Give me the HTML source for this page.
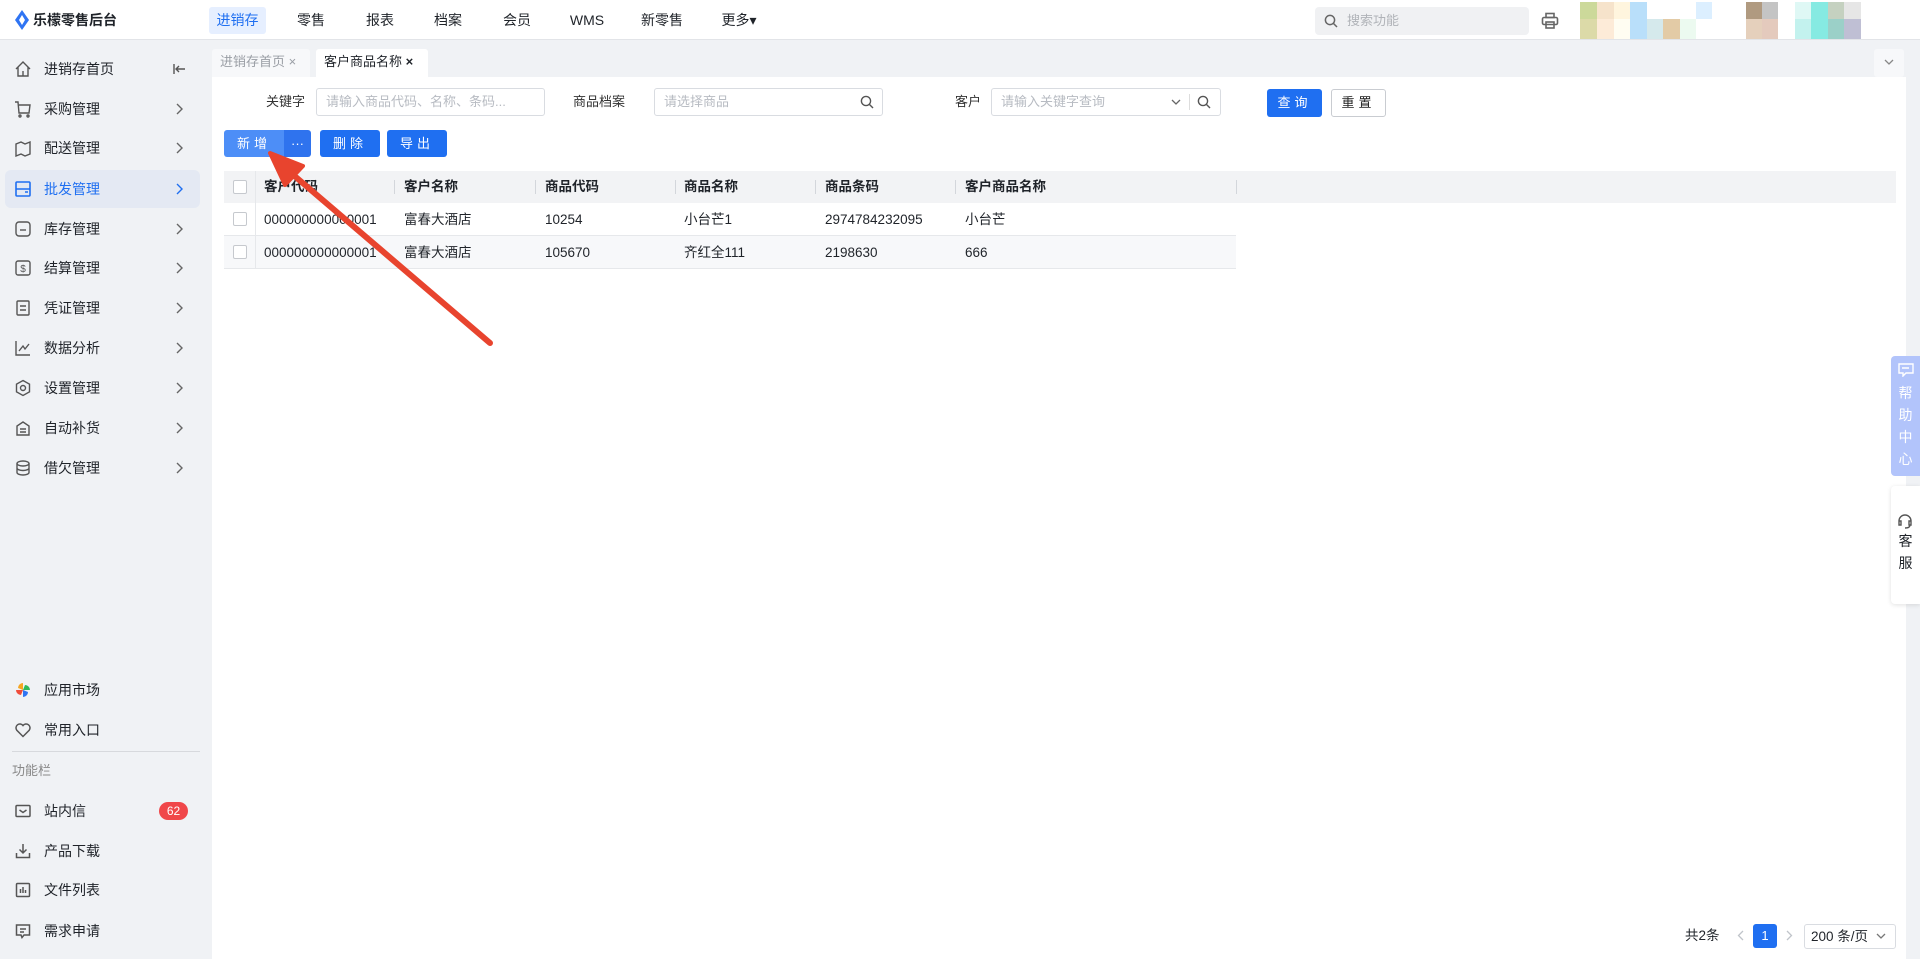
<!DOCTYPE html>
<html><head><meta charset="utf-8">
<style>
*{box-sizing:border-box;margin:0;padding:0}
body{width:1920px;height:959px;overflow:hidden;background:#f0f2f5;font-family:"Liberation Sans","Noto Sans CJK SC",sans-serif;font-size:14px;color:#1f2329;position:relative}
.abs{position:absolute}
.top{left:0;top:0;width:1920px;height:40px;background:#fff;border-bottom:1px solid #e2e4e8}
.nav{top:7px;height:27px;line-height:27px;font-size:14px;color:#1f2329;text-align:center}
.side{left:0;top:40px;width:211px;height:919px;background:#f0f2f5}
.mi{left:0;width:211px;height:36px;line-height:36px;font-size:14px}
.mi .ic{position:absolute;left:14px;top:9px;width:18px;height:18px}
.mi .tx{position:absolute;left:44px}
.mi .ch{position:absolute;left:175px;top:12px;width:8px;height:12px}
.content{left:212px;top:77px;width:1694px;height:882px;background:#fff}
.inp{height:28px;border:1px solid #d9dce1;border-radius:3px;background:#fff;color:#b7bbc2;font-size:13px;line-height:26px;padding-left:9px}
.lbl{font-size:13px;line-height:28px;color:#333}
.btn{height:27px;line-height:27px;color:#fff;background:#1f6ff1;border-radius:3px;text-align:center;font-size:13px;letter-spacing:4px}
.th{top:171px;height:32px;line-height:32px;font-weight:bold;font-size:13.5px}
.td{height:33px;line-height:33px;font-size:13.5px}
.cb{width:14px;height:14px;border:1px solid #c6c9ce;background:#fff;border-radius:2px}
.sep{width:1px;height:14px;background:#d3d6db;top:180px}
</style></head><body>
<div class="abs top"></div>
<svg class="abs" style="left:14px;top:10px" width="16" height="20" viewBox="0 0 16 20"><path d="M8 0L15 10L8 20L1 10Z" fill="#2f74f3"/><path d="M8 5L11 10L8 15L5 10Z" fill="#fff"/></svg>
<div class="abs" style="left:33px;top:9px;font-size:14px;font-weight:bold;line-height:22px">乐檬零售后台</div>
<div class="abs nav" style="left:209px;width:57px;background:#e6efff;color:#1f6ff1;border-radius:3px">进销存</div>
<div class="abs nav" style="left:291px;width:40px">零售</div>
<div class="abs nav" style="left:360px;width:40px">报表</div>
<div class="abs nav" style="left:428px;width:40px">档案</div>
<div class="abs nav" style="left:497px;width:40px">会员</div>
<div class="abs nav" style="left:562px;width:50px">WMS</div>
<div class="abs nav" style="left:637px;width:50px">新零售</div>
<div class="abs nav" style="left:714px;width:50px">更多▾</div>
<div class="abs" style="left:1315px;top:7px;width:214px;height:28px;background:#f0f1f3;border-radius:4px;color:#b0b3b8;font-size:13px;line-height:28px;padding-left:32px">搜索功能</div>
<svg class="abs" style="left:1324px;top:14px" width="14" height="14" viewBox="0 0 14 14"><circle cx="6" cy="6" r="4.6" fill="none" stroke="#666" stroke-width="1.5"/><path d="M9.5 9.5L13 13" stroke="#666" stroke-width="1.5"/></svg>
<svg class="abs" style="left:1541px;top:12px" width="18" height="18" viewBox="0 0 18 18" fill="none" stroke="#666" stroke-width="1.6"><rect x="5" y="1.5" width="8" height="4"/><rect x="1.5" y="5.5" width="15" height="7" rx="1.5"/><rect x="5" y="10" width="8" height="6"/></svg>
<div class="abs" style="left:1525px;top:0;width:395px;height:40px">
<svg width="395" height="40"><g>
<rect x="55" y="2" width="17" height="17" fill="#ccd99a"/><rect x="72" y="2" width="17" height="17" fill="#f6e3cb"/><rect x="89" y="2" width="16" height="17" fill="#fff5de"/><rect x="105" y="2" width="17" height="17" fill="#b9dffa"/><rect x="171" y="2" width="16" height="17" fill="#dcefff"/><rect x="221" y="2" width="16" height="17" fill="#b09a80"/><rect x="237" y="2" width="16" height="17" fill="#c4c4c4"/><rect x="270" y="2" width="16" height="17" fill="#dff8f5"/><rect x="286" y="2" width="17" height="17" fill="#86eae2"/><rect x="303" y="2" width="16" height="17" fill="#c5d1c0"/><rect x="319" y="2" width="17" height="17" fill="#e6e6e6"/>
<rect x="55" y="19" width="17" height="20" fill="#dcdaa8"/><rect x="72" y="19" width="17" height="20" fill="#fdebd8"/><rect x="89" y="19" width="16" height="20" fill="#fffdf2"/><rect x="105" y="19" width="17" height="20" fill="#b9dffa"/><rect x="122" y="19" width="16" height="20" fill="#d5e9ec"/><rect x="138" y="19" width="17" height="20" fill="#e3cba6"/><rect x="155" y="19" width="16" height="20" fill="#ecfaf0"/><rect x="221" y="19" width="16" height="20" fill="#e5d0bc"/><rect x="237" y="19" width="16" height="20" fill="#e4cabd"/><rect x="270" y="19" width="16" height="20" fill="#c3f2ee"/><rect x="286" y="19" width="17" height="20" fill="#86eae2"/><rect x="303" y="19" width="16" height="20" fill="#9bd0c8"/><rect x="319" y="19" width="17" height="20" fill="#bfbfd4"/>
</g></svg></div>

<div class="abs side"></div>
<div class="abs" style="left:5px;top:170px;width:195px;height:38px;background:#e4e9f3;border-radius:6px"></div>
<!-- menu -->
<div class="abs mi" style="top:51px"><svg class="ic" viewBox="0 0 18 18" fill="none" stroke="#555" stroke-width="1.4"><path d="M2 9L9 2L16 9M4 7V16H14V7M9 11V16"/></svg><span class="tx">进销存首页</span><svg class="abs" style="left:172px;top:12px" width="14" height="12" viewBox="0 0 14 12" fill="none" stroke="#555" stroke-width="1.4"><path d="M2 1V11M13 6H4M7 3L4 6L7 9"/></svg></div>
<div class="abs mi" style="top:91px"><svg class="ic" viewBox="0 0 18 18" fill="none" stroke="#555" stroke-width="1.4"><path d="M1 2H4L5 13H15L16 5H5"/><circle cx="6" cy="16" r="1"/><circle cx="14" cy="16" r="1"/></svg><span class="tx">采购管理</span><svg class="ch" viewBox="0 0 8 12" fill="none" stroke="#666" stroke-width="1.4"><path d="M2 1L7 6L2 11"/></svg></div>
<div class="abs mi" style="top:130px"><svg class="ic" viewBox="0 0 18 18" fill="none" stroke="#555" stroke-width="1.4"><path d="M2 5L7 3L11 5L16 3V15L11 17L7 15L2 17Z"/></svg><span class="tx">配送管理</span><svg class="ch" viewBox="0 0 8 12" fill="none" stroke="#666" stroke-width="1.4"><path d="M2 1L7 6L2 11"/></svg></div>
<div class="abs mi" style="top:171px;color:#1f6ff1"><svg class="ic" viewBox="0 0 18 18" fill="none" stroke="#1f6ff1" stroke-width="1.6"><rect x="2" y="2" width="14" height="14" rx="1"/><path d="M2 9H16M11 12H14"/></svg><span class="tx">批发管理</span><svg class="ch" viewBox="0 0 8 12" fill="none" stroke="#1f6ff1" stroke-width="1.4"><path d="M2 1L7 6L2 11"/></svg></div>
<div class="abs mi" style="top:211px"><svg class="ic" viewBox="0 0 18 18" fill="none" stroke="#555" stroke-width="1.4"><rect x="2" y="2" width="14" height="14" rx="3"/><path d="M6 10H12"/></svg><span class="tx">库存管理</span><svg class="ch" viewBox="0 0 8 12" fill="none" stroke="#666" stroke-width="1.4"><path d="M2 1L7 6L2 11"/></svg></div>
<div class="abs mi" style="top:250px"><svg class="ic" viewBox="0 0 18 18" fill="none" stroke="#555" stroke-width="1.4"><rect x="2" y="2" width="14" height="14" rx="2"/><text x="9" y="13" font-size="10" text-anchor="middle" fill="#555" stroke="none">$</text></svg><span class="tx">结算管理</span><svg class="ch" viewBox="0 0 8 12" fill="none" stroke="#666" stroke-width="1.4"><path d="M2 1L7 6L2 11"/></svg></div>
<div class="abs mi" style="top:290px"><svg class="ic" viewBox="0 0 18 18" fill="none" stroke="#555" stroke-width="1.4"><rect x="3" y="2" width="12" height="14" rx="1"/><path d="M6 7H12M6 11H12"/></svg><span class="tx">凭证管理</span><svg class="ch" viewBox="0 0 8 12" fill="none" stroke="#666" stroke-width="1.4"><path d="M2 1L7 6L2 11"/></svg></div>
<div class="abs mi" style="top:330px"><svg class="ic" viewBox="0 0 18 18" fill="none" stroke="#555" stroke-width="1.4"><path d="M2 2V16H16M5 12L9 7L11 10L15 5"/></svg><span class="tx">数据分析</span><svg class="ch" viewBox="0 0 8 12" fill="none" stroke="#666" stroke-width="1.4"><path d="M2 1L7 6L2 11"/></svg></div>
<div class="abs mi" style="top:370px"><svg class="ic" viewBox="0 0 18 18" fill="none" stroke="#555" stroke-width="1.4"><path d="M9 1.5L15.5 5.2V12.8L9 16.5L2.5 12.8V5.2Z"/><circle cx="9" cy="9" r="2.5"/></svg><span class="tx">设置管理</span><svg class="ch" viewBox="0 0 8 12" fill="none" stroke="#666" stroke-width="1.4"><path d="M2 1L7 6L2 11"/></svg></div>
<div class="abs mi" style="top:410px"><svg class="ic" viewBox="0 0 18 18" fill="none" stroke="#555" stroke-width="1.4"><path d="M3 16V7L9 3L15 7V16ZM6 10H12M6 13H12"/></svg><span class="tx">自动补货</span><svg class="ch" viewBox="0 0 8 12" fill="none" stroke="#666" stroke-width="1.4"><path d="M2 1L7 6L2 11"/></svg></div>
<div class="abs mi" style="top:450px"><svg class="ic" viewBox="0 0 18 18" fill="none" stroke="#555" stroke-width="1.4"><ellipse cx="9" cy="4.5" rx="6" ry="2.5"/><path d="M3 4.5V13.5C3 15 6 16 9 16S15 15 15 13.5V4.5M3 9C3 10.5 6 11.5 9 11.5S15 10.5 15 9"/></svg><span class="tx">借欠管理</span><svg class="ch" viewBox="0 0 8 12" fill="none" stroke="#666" stroke-width="1.4"><path d="M2 1L7 6L2 11"/></svg></div>

<div class="abs mi" style="top:672px"><svg class="ic" viewBox="0 0 18 18"><path d="M9 9V2A5 5 0 0 0 4 7Z" fill="#f5a623"/><path d="M9 9H16A5 5 0 0 0 11 4Z" fill="#2fb95b"/><path d="M9 9V16A5 5 0 0 0 14 11Z" fill="#2f74f3"/><path d="M9 9H2A5 5 0 0 0 7 14Z" fill="#f04d3b"/></svg><span class="tx">应用市场</span></div>
<div class="abs mi" style="top:712px"><svg class="ic" viewBox="0 0 18 18" fill="none" stroke="#555" stroke-width="1.5"><path d="M9 15.5L2.8 9.3A3.6 3.6 0 0 1 9 4.5A3.6 3.6 0 0 1 15.2 9.3Z"/></svg><span class="tx">常用入口</span></div>
<div class="abs" style="left:12px;top:751px;width:188px;height:1px;background:#d7d9dd"></div>
<div class="abs" style="left:12px;top:761px;font-size:13px;color:#888;line-height:20px">功能栏</div>
<div class="abs mi" style="top:793px"><svg class="ic" viewBox="0 0 18 18" fill="none" stroke="#555" stroke-width="1.5"><rect x="2" y="3.5" width="14" height="11" rx="1"/><path d="M5.5 8L9 10.5L12.5 8"/></svg><span class="tx">站内信</span><span class="abs" style="left:159px;top:9px;width:29px;height:18px;line-height:18px;border-radius:9px;background:#f0474a;color:#fff;font-size:12px;text-align:center">62</span></div>
<div class="abs mi" style="top:833px"><svg class="ic" viewBox="0 0 18 18" fill="none" stroke="#555" stroke-width="1.5"><path d="M9 2V11M5.5 7.5L9 11L12.5 7.5M2.5 11V15.5H15.5V11"/></svg><span class="tx">产品下载</span></div>
<div class="abs mi" style="top:872px"><svg class="ic" viewBox="0 0 18 18" fill="none" stroke="#555" stroke-width="1.5"><rect x="2.5" y="2.5" width="13" height="13" rx="1"/><path d="M6.5 12V8M9 12V6M11.5 12V9"/></svg><span class="tx">文件列表</span></div>
<div class="abs mi" style="top:913px"><svg class="ic" viewBox="0 0 18 18" fill="none" stroke="#555" stroke-width="1.5"><path d="M2.5 3H15.5V13H10L8 15.5L7 13H2.5Z M6 7H12M6 10H10"/></svg><span class="tx">需求申请</span></div>

<!-- tabs -->
<div class="abs" style="left:212px;top:49px;width:98px;height:28px;background:#f7f8fa;color:#9a9ea5;font-size:13px;line-height:26px;padding-left:8px;border-radius:3px 3px 0 0">进销存首页 ×</div>
<div class="abs" style="left:316px;top:49px;width:112px;height:28px;background:#fff;font-size:13px;line-height:26px;padding-left:8px;border-radius:3px 3px 0 0">客户商品名称 <b>×</b></div>
<div class="abs" style="left:1874px;top:49px;width:30px;height:28px;background:#f7f8fa;border-radius:3px"></div>
<svg class="abs" style="left:1884px;top:59px" width="10" height="7" viewBox="0 0 10 7" fill="none" stroke="#888" stroke-width="1.3"><path d="M1 1L5 5L9 1"/></svg>

<div class="abs content"></div>
<div class="abs lbl" style="left:266px;top:88px">关键字</div>
<div class="abs inp" style="left:316px;top:88px;width:229px">请输入商品代码、名称、条码...</div>
<div class="abs lbl" style="left:573px;top:88px">商品档案</div>
<div class="abs inp" style="left:654px;top:88px;width:229px">请选择商品</div>
<svg class="abs" style="left:860px;top:95px" width="14" height="14" viewBox="0 0 14 14"><circle cx="6" cy="6" r="4.6" fill="none" stroke="#555" stroke-width="1.4"/><path d="M9.5 9.5L13 13" stroke="#555" stroke-width="1.4"/></svg>
<div class="abs lbl" style="left:955px;top:88px">客户</div>
<div class="abs inp" style="left:991px;top:88px;width:230px">请输入关键字查询</div>
<svg class="abs" style="left:1171px;top:99px" width="10" height="7" viewBox="0 0 10 7" fill="none" stroke="#666" stroke-width="1.3"><path d="M1 1L5 5L9 1"/></svg>
<div class="abs" style="left:1189px;top:94px;width:1px;height:16px;background:#ddd"></div>
<svg class="abs" style="left:1197px;top:95px" width="14" height="14" viewBox="0 0 14 14"><circle cx="6" cy="6" r="4.6" fill="none" stroke="#555" stroke-width="1.4"/><path d="M9.5 9.5L13 13" stroke="#555" stroke-width="1.4"/></svg>
<div class="abs btn" style="left:1267px;top:89px;width:55px;height:28px;line-height:28px">查询</div>
<div class="abs btn" style="left:1331px;top:89px;width:55px;height:28px;line-height:26px;background:#fff;color:#222;border:1px solid #c9ccd1">重置</div>

<div class="abs btn" style="left:224px;top:130px;width:60px;background:#4d8ef7;border-radius:3px 0 0 3px">新增</div>
<div class="abs btn" style="left:284px;top:130px;width:27px;background:#2f73ee;border-radius:0 3px 3px 0;letter-spacing:0">···</div>
<div class="abs btn" style="left:320px;top:130px;width:60px">删除</div>
<div class="abs btn" style="left:387px;top:130px;width:60px">导出</div>

<div class="abs" style="left:224px;top:171px;width:1672px;height:32px;background:#f2f3f5"></div>
<div class="abs" style="left:224px;top:235px;width:1012px;height:33px;background:#f7f8fa"></div>
<div class="abs" style="left:224px;top:235px;width:1012px;height:1px;background:#e6e8eb"></div>
<div class="abs" style="left:224px;top:268px;width:1012px;height:1px;background:#e6e8eb"></div>
<div class="abs" style="left:255px;top:171px;width:1px;height:97px;background:#e6e8eb"></div>
<div class="abs cb" style="left:233px;top:180px"></div>
<div class="abs cb" style="left:233px;top:212px"></div>
<div class="abs cb" style="left:233px;top:245px"></div>
<div class="abs th" style="left:264px">客户代码</div>
<div class="abs th" style="left:404px">客户名称</div>
<div class="abs th" style="left:545px">商品代码</div>
<div class="abs th" style="left:684px">商品名称</div>
<div class="abs th" style="left:825px">商品条码</div>
<div class="abs th" style="left:965px">客户商品名称</div>
<div class="abs sep" style="left:394px"></div><div class="abs sep" style="left:535px"></div><div class="abs sep" style="left:675px"></div><div class="abs sep" style="left:815px"></div><div class="abs sep" style="left:955px"></div><div class="abs sep" style="left:1236px"></div>
<div class="abs td" style="left:264px;top:203px">000000000000001</div>
<div class="abs td" style="left:404px;top:203px">富春大酒店</div>
<div class="abs td" style="left:545px;top:203px">10254</div>
<div class="abs td" style="left:684px;top:203px">小台芒1</div>
<div class="abs td" style="left:825px;top:203px">2974784232095</div>
<div class="abs td" style="left:965px;top:203px">小台芒</div>
<div class="abs td" style="left:264px;top:236px">000000000000001</div>
<div class="abs td" style="left:404px;top:236px">富春大酒店</div>
<div class="abs td" style="left:545px;top:236px">105670</div>
<div class="abs td" style="left:684px;top:236px">齐红全111</div>
<div class="abs td" style="left:825px;top:236px">2198630</div>
<div class="abs td" style="left:965px;top:236px">666</div>

<svg class="abs" style="left:0;top:0" width="1920" height="959"><path d="M490 343L284 167" stroke="#e8442e" stroke-width="6" stroke-linecap="round"/><path d="M270 153L303 166L285 185Z" fill="#e8442e" stroke="#e8442e" stroke-width="4" stroke-linejoin="round"/></svg>

<!-- pagination -->
<div class="abs" style="left:1685px;top:926px;font-size:13.5px;line-height:20px">共2条</div>
<svg class="abs" style="left:1737px;top:930px" width="7" height="11" viewBox="0 0 7 11" fill="none" stroke="#c0c4ca" stroke-width="1.3"><path d="M6 1L1.5 5.5L6 10"/></svg>
<div class="abs" style="left:1753px;top:924px;width:24px;height:24px;background:#1f6ff1;color:#fff;border-radius:3px;text-align:center;line-height:24px;font-size:13px">1</div>
<svg class="abs" style="left:1786px;top:930px" width="7" height="11" viewBox="0 0 7 11" fill="none" stroke="#c0c4ca" stroke-width="1.3"><path d="M1 1L5.5 5.5L1 10"/></svg>
<div class="abs" style="left:1804px;top:924px;width:92px;height:25px;border:1px solid #d9dce1;border-radius:3px;font-size:13.5px;line-height:23px;padding-left:6px">200 条/页</div>
<svg class="abs" style="left:1876px;top:933px" width="10" height="7" viewBox="0 0 10 7" fill="none" stroke="#777" stroke-width="1.3"><path d="M1 1L5 5L9 1"/></svg>

<!-- right helpers -->
<div class="abs" style="left:1891px;top:356px;width:29px;height:120px;background:#b2c4fb;border-radius:4px 0 0 4px;color:#fff;font-size:14px;text-align:center;line-height:22px;padding-top:26px">帮<br>助<br>中<br>心</div>
<svg class="abs" style="left:1898px;top:363px" width="16" height="14" viewBox="0 0 16 14" fill="none" stroke="#fff" stroke-width="1.4"><path d="M1 1H15V10H8L5 13V10H1Z M4 5H11"/></svg>
<div class="abs" style="left:1891px;top:486px;width:29px;height:118px;background:#fff;border-radius:4px 0 0 4px;box-shadow:0 1px 5px rgba(0,0,0,.12);font-size:14px;text-align:center;line-height:22px;padding-top:44px">客<br>服</div>
<svg class="abs" style="left:1897px;top:514px" width="16" height="16" viewBox="0 0 16 16" fill="none" stroke="#555" stroke-width="1.4"><path d="M2 9V7A6 6 0 0 1 14 7V9M2 7H4V11H2ZM12 7H14V11H12ZM13 11C13 13 11 14 8 14"/></svg>
</body></html>
